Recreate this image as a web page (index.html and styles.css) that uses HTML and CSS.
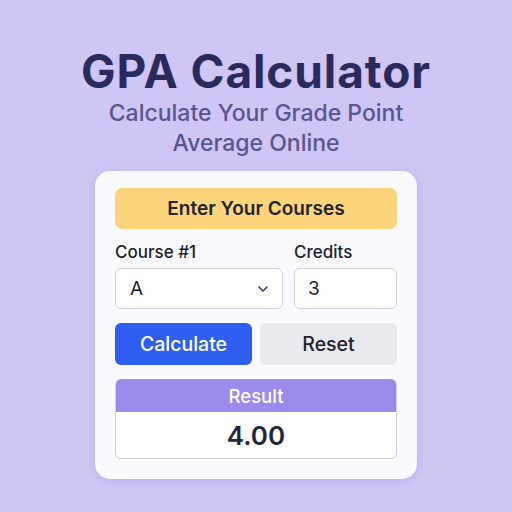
FILE: index.html
```html
<!DOCTYPE html>
<html>
<head>
<meta charset="utf-8">
<link rel="stylesheet" href="styles.css">
</head>
<body>
<div class="page">
  <h1 class="title">GPA Calculator</h1>
  <p class="subtitle">Calculate Your Grade Point<br>Average Online</p>
  <div class="card">
    <div class="banner">Enter Your Courses</div>
    <div class="fields">
      <div class="field course">
        <label class="label">Course #1</label>
        <div class="select">
          <span>A</span>
          <svg class="chev" width="12" height="8" viewBox="0 0 12 8"><path d="M2 2 L6 6 L10 2" fill="none" stroke="#3a3a5e" stroke-width="1.6" stroke-linecap="round" stroke-linejoin="round"/></svg>
        </div>
      </div>
      <div class="field credits">
        <label class="label">Credits</label>
        <div class="input">3</div>
      </div>
    </div>
    <div class="buttons">
      <div class="btn primary">Calculate</div>
      <div class="btn secondary">Reset</div>
    </div>
    <div class="result">
      <div class="result-head">Result</div>
      <div class="result-body">4.00</div>
    </div>
  </div>
</div>
</body>
</html>
```
FILE: styles.css
```css
html, body {
  margin: 0;
  padding: 0;
}
body {
  width: 512px;
  height: 512px;
  background: #cfc6f6;
  font-family: Inter, "Noto Sans", sans-serif;
  overflow: hidden;
}
.page {
  display: flex;
  flex-direction: column;
  align-items: center;
  padding-top: 46px;
}
.title {
  margin: 0;
  font-size: 46px;
  line-height: 50px;
  font-weight: 700;
  color: #2a2b5c;
  letter-spacing: 0.9px;
}
.subtitle {
  margin: 2px 0 0;
  font-size: 23px;
  line-height: 30px;
  font-weight: 500;
  color: #58558f;
  text-align: center;
}
.card {
  margin-top: 13px;
  width: 282px;
  padding: 17px 20px 20px;
  background: #f9f9fe;
  border-radius: 15px;
  box-shadow: 0 2px 8px rgba(90, 70, 170, 0.15);
  display: flex;
  flex-direction: column;
}
.banner {
  height: 41px;
  background: #fcd57b;
  border-radius: 7px;
  display: flex;
  align-items: center;
  justify-content: center;
  font-size: 19px;
  font-weight: 600;
  color: #23232e;
}
.fields {
  display: flex;
  gap: 11px;
  margin-top: 11px;
}
.field {
  display: flex;
  flex-direction: column;
}
.course { width: 168px; }
.credits { width: 103px; }
.label {
  font-size: 17px;
  line-height: 24px;
  font-weight: 500;
  color: #1f1f2c;
  margin-bottom: 4px;
}
.select, .input {
  box-sizing: border-box;
  height: 41px;
  border: 1.5px solid #cfd0e0;
  border-radius: 6px;
  background: #ffffff;
  display: flex;
  align-items: center;
  font-size: 19px;
  color: #1f1f2c;
}
.select {
  justify-content: space-between;
  padding: 0 13px 0 14px;
}
.input {
  padding: 0 13px;
}
.buttons {
  display: flex;
  gap: 8px;
  margin-top: 14px;
}
.btn {
  flex: 1;
  height: 42px;
  border-radius: 6px;
  display: flex;
  align-items: center;
  justify-content: center;
  font-size: 19.5px;
  font-weight: 500;
}
.primary {
  background: #2f5ff0;
  color: #ffffff;
}
.secondary {
  background: #e9eaf0;
  color: #1f1f2c;
}
.result {
  margin-top: 14px;
  border-radius: 6px;
  overflow: hidden;
  border: 1px solid #cfd0de;
  border-top: none;
}
.result-head {
  height: 33px;
  background: #9b89ec;
  color: #ffffff;
  display: flex;
  align-items: center;
  justify-content: center;
  font-size: 18.5px;
  font-weight: 500;
}
.result-body {
  height: 46px;
  background: #ffffff;
  display: flex;
  align-items: center;
  justify-content: center;
  font-size: 26px;
  font-weight: 600;
  color: #25253a;
}
```
